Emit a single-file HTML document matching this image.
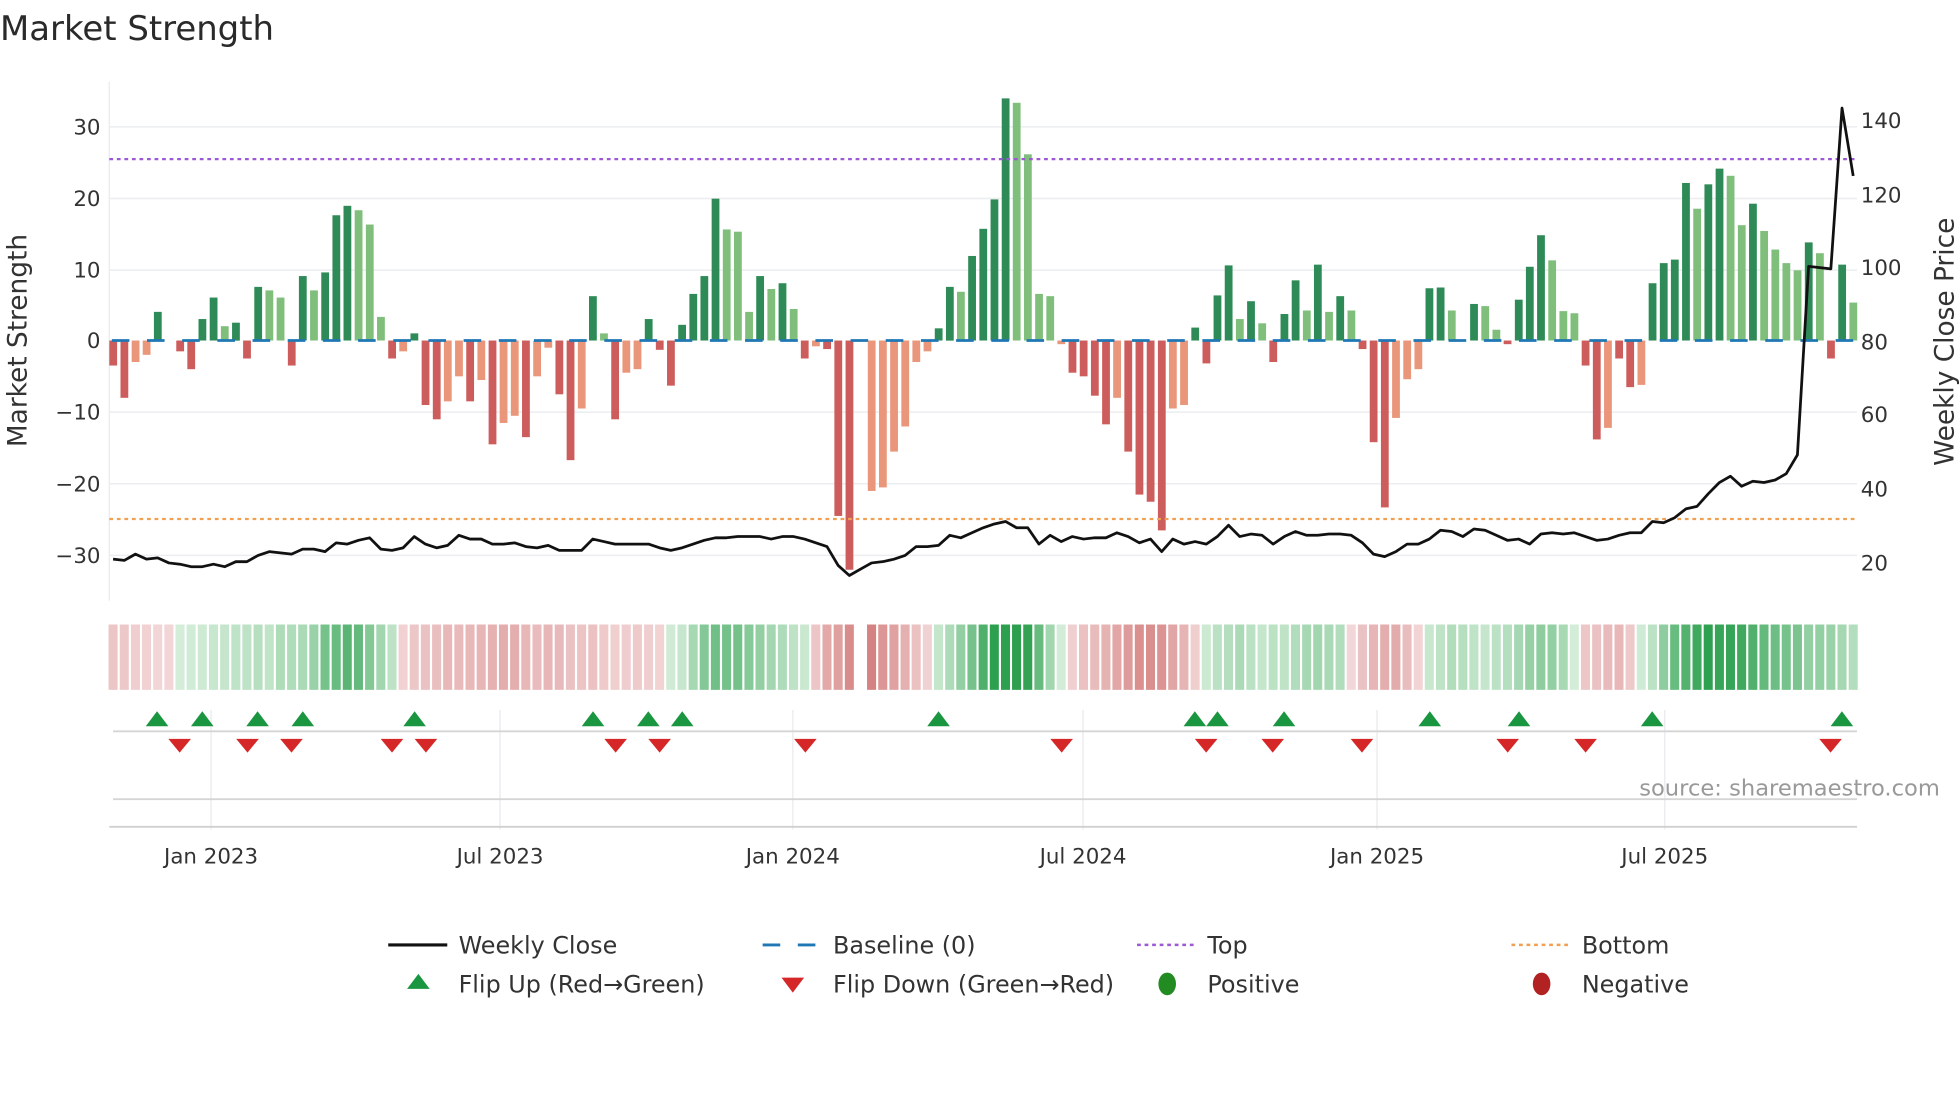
<!DOCTYPE html>
<html><head><meta charset="utf-8">
<style>
html,body{margin:0;padding:0;background:#fff;}
svg{display:block;font-family:"DejaVu Sans","Liberation Sans",sans-serif;}
</style></head>
<body>
<svg id="c" width="1960" height="1102" viewBox="0 0 1560 877" preserveAspectRatio="none" xmlns="http://www.w3.org/2000/svg">
<rect width="1560" height="877" fill="#fff"/>
<text x="0" y="32" font-size="27" fill="#2a2a2a">Market Strength</text>
<g stroke="#ebedf0" stroke-width="1.2">
<line x1="87" x2="1478" y1="101" y2="101"/><line x1="87" x2="1478" y1="158" y2="158"/><line x1="87" x2="1478" y1="215" y2="215"/>
<line x1="87" x2="1478" y1="328" y2="328"/><line x1="87" x2="1478" y1="385" y2="385"/><line x1="87" x2="1478" y1="442" y2="442"/>
<line x1="87" x2="87" y1="65" y2="478"/>
<line x1="168" x2="168" y1="565" y2="660"/><line x1="398" x2="398" y1="565" y2="660"/><line x1="631" x2="631" y1="565" y2="660"/>
<line x1="862" x2="862" y1="565" y2="660"/><line x1="1096" x2="1096" y1="565" y2="660"/><line x1="1325" x2="1325" y1="565" y2="660"/>
</g>
<line x1="90" x2="1478" y1="582" y2="582" stroke="#d5d5d5" stroke-width="1.5"/>
<line x1="90" x2="1478" y1="636" y2="636" stroke="#d5d5d5" stroke-width="1.5"/>
<line x1="87" x2="1478" y1="658" y2="658" stroke="#d0d0d0" stroke-width="1.5"/>
<g id="bars"></g>
<g id="heat"></g>
<line x1="87" x2="1478" y1="271" y2="271" stroke="#1f77b4" stroke-width="2.2" stroke-dasharray="14 14" stroke-dashoffset="-2"/>
<line x1="87" x2="1478" y1="126.6" y2="126.6" stroke="#9b59d6" stroke-width="1.8" stroke-dasharray="3 3"/>
<line x1="87" x2="1478" y1="413" y2="413" stroke="#f0a050" stroke-width="1.8" stroke-dasharray="3 3"/>
<polyline id="price" fill="none" stroke="#111" stroke-width="2.2" stroke-linejoin="round"/>
<g id="tri"></g>
<g font-size="17" fill="#333" text-anchor="end">
<text x="80" y="107">30</text><text x="80" y="164">20</text><text x="80" y="221">10</text><text x="80" y="277">0</text>
<text x="80" y="334">−10</text><text x="80" y="391">−20</text><text x="80" y="448">−30</text>
</g>
<g font-size="17" fill="#333">
<text x="1481" y="102">140</text><text x="1481" y="161">120</text><text x="1481" y="219">100</text><text x="1481" y="278">80</text>
<text x="1481" y="336">60</text><text x="1481" y="395">40</text><text x="1481" y="454">20</text>
</g>
<g font-size="17" fill="#333" text-anchor="middle">
<text x="168" y="687">Jan 2023</text><text x="398" y="687">Jul 2023</text><text x="631" y="687">Jan 2024</text>
<text x="862" y="687">Jul 2024</text><text x="1096" y="687">Jan 2025</text><text x="1325" y="687">Jul 2025</text>
</g>
<text transform="translate(21,271) rotate(-90)" font-size="21" fill="#333" text-anchor="middle">Market Strength</text>
<text transform="translate(1555,272) rotate(-90)" font-size="21" fill="#333" text-anchor="middle">Weekly Close Price</text>
<text x="1544" y="633" font-size="18" fill="#999" text-anchor="end">source: sharemaestro.com</text>
<g font-size="19" fill="#333">
<line x1="309" x2="356" y1="752" y2="752" stroke="#111" stroke-width="2.5"/>
<text x="365" y="759">Weekly Close</text>
<line x1="607" x2="650" y1="752" y2="752" stroke="#1f77b4" stroke-width="2.2" stroke-dasharray="14 14"/>
<text x="663" y="759">Baseline (0)</text>
<line x1="905" x2="950" y1="752" y2="752" stroke="#9b59d6" stroke-width="2" stroke-dasharray="3 3"/>
<text x="961" y="759">Top</text>
<line x1="1203" x2="1248" y1="752" y2="752" stroke="#f0a050" stroke-width="2" stroke-dasharray="3 3"/>
<text x="1259" y="759">Bottom</text>
<polygon points="324,787 342,787 333,775" fill="#1a9641"/>
<text x="365" y="790">Flip Up (Red→Green)</text>
<polygon points="622,778 640,778 631,790" fill="#d62728"/>
<text x="663" y="790">Flip Down (Green→Red)</text>
<ellipse cx="929" cy="783" rx="7" ry="9" fill="#228b22"/>
<text x="961" y="790">Positive</text>
<ellipse cx="1227" cy="783" rx="7" ry="9" fill="#b22222"/>
<text x="1259" y="790">Negative</text>
</g>
</svg>
<script>
var NS="http://www.w3.org/2000/svg";
var d=[[-3.5,'r'],[-8,'r'],[-3,'o'],[-2,'o'],[4,'g'],[0,'g'],[-1.5,'r'],[-4,'r'],[3,'g'],[6,'g'],[2,'l'],[2.5,'g'],[-2.5,'r'],[7.5,'g'],[7,'l'],[6,'l'],[-3.5,'r'],[9,'g'],[7,'l'],[9.5,'g'],[17.5,'g'],[18.8,'g'],[18.2,'l'],[16.2,'l'],[3.3,'l'],[-2.5,'r'],[-1.5,'o'],[1,'g'],[-9,'r'],[-11,'r'],[-8.5,'o'],[-5,'o'],[-8.5,'r'],[-5.5,'o'],[-14.5,'r'],[-11.5,'o'],[-10.5,'o'],[-13.5,'r'],[-5,'o'],[-1,'o'],[-7.5,'r'],[-16.7,'r'],[-9.5,'o'],[6.2,'g'],[1,'l'],[-11,'r'],[-4.5,'o'],[-4,'o'],[3,'g'],[-1.3,'r'],[-6.3,'r'],[2.2,'g'],[6.5,'g'],[9,'g'],[19.8,'g'],[15.5,'l'],[15.2,'l'],[4,'l'],[9,'g'],[7.2,'l'],[8,'g'],[4.4,'l'],[-2.5,'r'],[-0.8,'o'],[-1.2,'r'],[-24.5,'r'],[-32,'r'],[null,''],[-21,'o'],[-20.5,'o'],[-15.5,'o'],[-12,'o'],[-3,'o'],[-1.5,'o'],[1.7,'g'],[7.5,'g'],[6.8,'l'],[11.8,'g'],[15.6,'g'],[19.7,'g'],[33.8,'g'],[33.2,'l'],[26,'l'],[6.5,'l'],[6.2,'l'],[-0.5,'o'],[-4.5,'r'],[-5,'r'],[-7.7,'r'],[-11.7,'r'],[-8,'o'],[-15.5,'r'],[-21.5,'r'],[-22.5,'r'],[-26.5,'r'],[-9.5,'o'],[-9,'o'],[1.8,'g'],[-3.2,'r'],[6.3,'g'],[10.5,'g'],[3,'l'],[5.5,'g'],[2.4,'l'],[-3,'r'],[3.7,'g'],[8.4,'g'],[4.2,'l'],[10.6,'g'],[4,'l'],[6.2,'g'],[4.2,'l'],[-1.2,'r'],[-14.2,'r'],[-23.3,'r'],[-10.8,'o'],[-5.4,'o'],[-4,'o'],[7.3,'g'],[7.4,'g'],[4.2,'l'],[0,'l'],[5.1,'g'],[4.8,'l'],[1.5,'l'],[-0.5,'r'],[5.7,'g'],[10.3,'g'],[14.7,'g'],[11.2,'l'],[4.1,'l'],[3.8,'l'],[-3.5,'r'],[-13.8,'r'],[-12.2,'o'],[-2.5,'r'],[-6.5,'r'],[-6.2,'o'],[8,'g'],[10.8,'g'],[11.3,'g'],[22,'g'],[18.4,'l'],[21.8,'g'],[24,'g'],[23,'l'],[16.1,'l'],[19.1,'g'],[15.3,'l'],[12.7,'l'],[10.8,'l'],[9.8,'l'],[13.7,'g'],[12.2,'l'],[-2.5,'r'],[10.6,'g'],[5.3,'l']];
var col={g:'#2e8b57',l:'#7fbf7b',r:'#cd5c5c',o:'#e9967a'};
var py=[445,446,441,445,444,448,449,451,451,449,451,447,447,442,439,440,441,437,437,439,432,433,430,428,437,438,436,427,433,436,434,426,429,429,433,433,432,435,436,434,438,438,438,429,431,433,433,433,433,436,438,436,433,430,428,428,427,427,427,429,427,427,429,432,435,450,458,453,448,447,445,442,435,435,434,426,428,424,420,417,415,420,420,433,426,431,427,429,428,428,424,427,432,429,439,429,433,431,433,427,418,427,425,426,433,427,423,426,426,425,425,426,432,441,443,439,433,433,429,422,423,427,421,422,426,430,429,433,425,424,425,424,427,430,429,426,424,424,415,416,412,405,403,393,384,379,387,383,384,382,377,362,212,213,214,86,140];
var n=d.length, x0=90, step=(1475-90)/(n-1);
var bars=document.getElementById('bars'),heat=document.getElementById('heat'),tri=document.getElementById('tri');
function el(t,a,p){var e=document.createElementNS(NS,t);for(var k in a)e.setAttribute(k,a[k]);p.appendChild(e);return e;}
var pts=[];
for(var i=0;i<n;i++){
 var x=x0+i*step, v=d[i][0];
 if(i<py.length)pts.push(x.toFixed(1)+','+py[i]);
 if(v===null)continue;
 var y=271-v*5.7;
 el('rect',{x:(x-3).toFixed(1),y:Math.min(y,271).toFixed(1),width:6.2,height:Math.abs(271-y).toFixed(1),fill:col[d[i][1]]},bars);
 var s=0,c=0;for(var j=Math.max(0,i-2);j<=Math.min(n-1,i+2);j++){if(d[j][0]!==null){s+=d[j][0];c++;}}
 var m=s/c, t=Math.min(1,Math.abs(m)/26), fill;
 if(m>=0){t=Math.min(1,Math.abs(m)/22);fill='rgb('+Math.round(214-170*t)+','+Math.round(238-78*t)+','+Math.round(218-140*t)+')';}
 else{fill='rgb('+Math.round(243-35*t)+','+Math.round(216-100*t)+','+Math.round(217-102*t)+')';}
 el('rect',{x:(x-3.6).toFixed(1),y:497,width:7.2,height:52,fill:fill},heat);
}
document.getElementById('price').setAttribute('points',pts.join(' '));
[125,161,205,241,330,472,516,543,747,951,969,1022,1138,1209,1315,1466].forEach(function(x){el('polygon',{points:(x-9)+',578 '+(x+9)+',578 '+x+',566',fill:'#1a9641'},tri);});
[143,197,232,312,339,490,525,641,845,960,1013,1084,1200,1262,1457].forEach(function(x){el('polygon',{points:(x-9)+',588 '+(x+9)+',588 '+x+',599',fill:'#d62728'},tri);});
</script>
</body></html>
